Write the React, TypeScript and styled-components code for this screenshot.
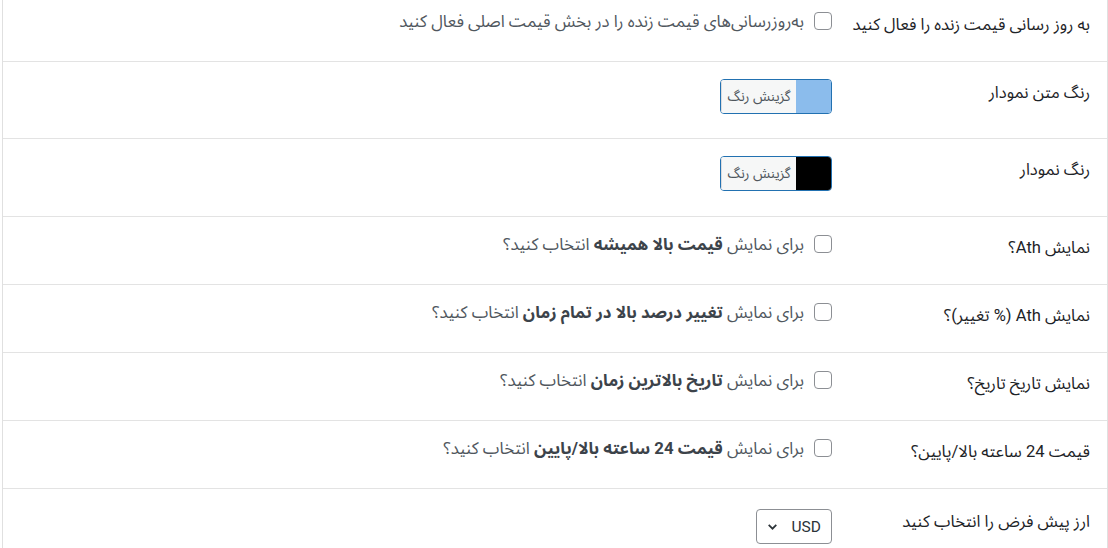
import React from 'react';
import styled, { createGlobalStyle } from 'styled-components';

const GlobalStyle = createGlobalStyle`
  body {
    margin: 0;
    background: #ffffff;
    font-family: Roboto, "Noto Sans Arabic", "DejaVu Sans", sans-serif;
    direction: rtl;
  }
`;

const Table = styled.div`
  width: 1104px;
  margin-top: -6px;
  border-left: 1px solid #e0e0e0;
  border-right: 1px solid #e0e0e0;
  background: #ffffff;
`;

const Row = styled.div<{ $height: number }>`
  display: grid;
  grid-template-columns: 275px 1fr;
  height: ${(p) => p.$height}px;
  box-sizing: border-box;
  border-bottom: 1px solid #e3e3e3;
`;

const Label = styled.div<{ $top?: number }>`
  padding: ${(p) => p.$top ?? 19}px 17px 0 0;
  font-size: 16.6px;
  line-height: 24px;
  color: #1d2327;
`;

const Field = styled.div<{ $top?: number }>`
  display: flex;
  align-items: flex-start;
  gap: 10px;
  padding-top: ${(p) => p.$top ?? 15}px;
`;

const Check = styled.span`
  width: 18px;
  height: 18px;
  margin-top: 3px;
  box-sizing: border-box;
  border: 1px solid #8c8f94;
  border-radius: 4px;
  background: #fff;
  flex-shrink: 0;
`;

const Desc = styled.span`
  font-size: 16.8px;
  line-height: 24px;
  color: #50575e;

  b {
    color: #3c434a;
    font-weight: 700;
  }
`;

const PickerButton = styled.div`
  display: flex;
  width: 112px;
  height: 35px;
  margin-top: 2px;
  box-sizing: border-box;
  border: 1px solid #2271b1;
  border-radius: 4px;
  overflow: hidden;
`;

const Swatch = styled.span<{ $color: string }>`
  width: 35px;
  background: ${(p) => p.$color};
`;

const PickerText = styled.span`
  flex: 1;
  display: flex;
  align-items: center;
  justify-content: center;
  background: #f6f7f7;
  border-left: 1px solid #dcdcde;
  font-size: 14px;
  color: #50575e;
`;

const Select = styled.div`
  display: flex;
  align-items: center;
  justify-content: space-between;
  width: 76px;
  height: 35px;
  padding: 0 10px 0 9px;
  box-sizing: border-box;
  border: 1px solid #8c8f94;
  border-radius: 4px;
  font-size: 15.5px;
  color: #2c3338;
`;

const checkRows: { label: React.ReactNode; desc: React.ReactNode }[] = [
  {
    label: 'نمایش Ath؟',
    desc: (
      <>
        برای نمایش <b>قیمت بالا همیشه</b> انتخاب کنید؟
      </>
    ),
  },
  {
    label: 'نمایش Ath (% تغییر)؟',
    desc: (
      <>
        برای نمایش <b>تغییر درصد بالا در تمام زمان</b> انتخاب کنید؟
      </>
    ),
  },
  {
    label: 'نمایش تاریخ تاریخ؟',
    desc: (
      <>
        برای نمایش <b>تاریخ بالاترین زمان</b> انتخاب کنید؟
      </>
    ),
  },
  {
    label: 'قیمت 24 ساعته بالا/پایین؟',
    desc: (
      <>
        برای نمایش <b>قیمت 24 ساعته بالا/پایین</b> انتخاب کنید؟
      </>
    ),
  },
];

const ColorPicker: React.FC<{ color: string }> = ({ color }) => (
  <PickerButton>
    <Swatch $color={color} />
    <PickerText>گزینش رنگ</PickerText>
  </PickerButton>
);

const App: React.FC = () => {
  return (
    <>
      <GlobalStyle />
      <Table>
        <Row $height={68}>
          <Label>به روز رسانی قیمت زنده را فعال کنید</Label>
          <Field>
            <Check />
            <Desc>به‌روزرسانی‌های قیمت زنده را در بخش قیمت اصلی فعال کنید</Desc>
          </Field>
        </Row>
        <Row $height={77}>
          <Label>رنگ متن نمودار</Label>
          <Field>
            <ColorPicker color="#8bbcec" />
          </Field>
        </Row>
        <Row $height={78}>
          <Label>رنگ نمودار</Label>
          <Field>
            <ColorPicker color="#000000" />
          </Field>
        </Row>
        {checkRows.map((r, i) => (
          <Row key={i} $height={68}>
            <Label>{r.label}</Label>
            <Field>
              <Check />
              <Desc>{r.desc}</Desc>
            </Field>
          </Row>
        ))}
        <Row $height={80}>
          <Label $top={21}>ارز پیش فرض را انتخاب کنید</Label>
          <Field $top={20}>
            <Select>
              <span>USD</span>
              <svg width="13" height="13" viewBox="0 0 12 12" fill="none">
                <path d="M2.5 4.5 6 8l3.5-3.5" stroke="#2c3338" strokeWidth="1.6" />
              </svg>
            </Select>
          </Field>
        </Row>
      </Table>
    </>
  );
};

export default App;
